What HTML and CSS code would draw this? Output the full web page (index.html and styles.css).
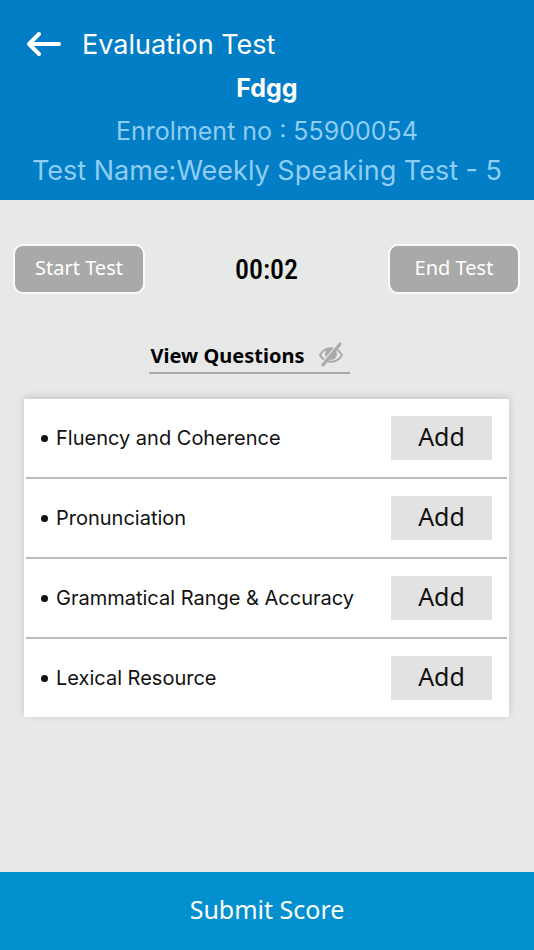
FILE: index.html
```html
<!DOCTYPE html>
<html lang="en">
<head>
    <meta charset="UTF-8">
    <meta name="viewport" content="width=device-width, initial-scale=1.0">
    <title>Evaluation Test</title>
    <link rel="stylesheet" href="styles.css">
</head>
<body>

    <header class="header">
        <div class="title-bar">
            <button class="back" type="button" aria-label="Back">
                <svg width="36" height="28" viewBox="0 0 36 28" fill="none" stroke="currentColor" stroke-width="4" stroke-linecap="round" stroke-linejoin="round">
                    <path d="M3 14H33M13 4L3 14L13 24"/>
                </svg>
            </button>
            <h1>Evaluation Test</h1>
        </div>
        <p class="student">Fdgg</p>
        <p class="enrolment">Enrolment no : 55900054</p>
        <p class="test-name">Test Name:Weekly Speaking Test - 5</p>
    </header>

    <main>
        <div class="controls">
            <button class="test-button" type="button">Start Test</button>
            <time class="timer">00:02</time>
            <button class="test-button" type="button">End Test</button>
        </div>

        <div class="questions">
            <a class="view-questions" href="#">
                View Questions
                <svg width="26" height="26" viewBox="0 0 26 26" fill="none" stroke="#aaa" stroke-width="2" stroke-linecap="round">
                    <path d="M2 13C7 4 19 4 24 13C19 22 7 22 2 13Z"/>
                    <circle cx="13" cy="12" r="6" fill="#aaa" stroke="none"/>
                    <path d="M20 2L3 23" stroke="#e7e9e8" stroke-width="2"/>
                    <path d="M22 2L5 23" stroke-width="3"/>
                </svg>
            </a>
        </div>

        <ul class="criteria">
            <li><span>Fluency and Coherence</span><button type="button">Add</button></li>
            <li><span>Pronunciation</span><button type="button">Add</button></li>
            <li><span>Grammatical Range &amp; Accuracy</span><button type="button">Add</button></li>
            <li><span>Lexical Resource</span><button type="button">Add</button></li>
        </ul>
    </main>

    <button class="submit" type="button">Submit Score</button>

</body>
</html>
```

FILE: styles.css
```css
* {
    box-sizing: border-box;
}
body {
    display: flex;
    flex-direction: column;
    min-height: 100vh;
    margin: 0;
    background-color: #e7e9e8;
    color: #111;
    font-family: Inter, Roboto, sans-serif;
}
button {
    padding: 0 0 4px;
    border: none;
    cursor: pointer;
}
h1, p {
    margin: 0;
    font-weight: 400;
}
.header {
    padding: 24px 0 8px;
    background-color: #027ec6;
    color: #fff;
    text-align: center;
}
.title-bar {
    display: flex;
    align-items: center;
    gap: 20px;
    height: 40px;
    padding-left: 26px;
}
.back {
    display: flex;
    padding: 0;
    background: none;
    color: #fff;
}
.title-bar h1 {
    font-size: 27px;
}
.header .student {
    font-size: 25px;
    font-weight: 700;
    line-height: 48px;
}
.enrolment, .test-name {
    color: #8fcdf3;
}
.enrolment {
    font-size: 25px;
    line-height: 38px;
}
.test-name {
    font-size: 27px;
    line-height: 42px;
}
main {
    flex: 1;
    padding: 44px 25px 44px 24px;
}
.controls {
    display: flex;
    justify-content: space-between;
    align-items: center;
    margin: 0 -11px;
}
.test-button {
    width: 132px;
    height: 50px;
    border: 2px solid #fafafa;
    border-radius: 10px;
    background-color: #a9a9a9;
    color: #fff;
    font: 20px "Noto Sans", sans-serif;
}
.timer {
    color: #000;
    font: 500 28px "Roboto Condensed", "Liberation Sans Narrow", sans-serif;
}
.questions {
    display: flex;
    justify-content: center;
    padding: 42px 34px 25px 0;
}
.view-questions {
    display: flex;
    align-items: center;
    gap: 14px;
    height: 38px;
    padding: 2px 6px 0 2px;
    border-bottom: 2px solid #aaa;
    color: #000;
    font: bold 20px "Noto Sans", sans-serif;
    text-decoration: none;
}
.criteria {
    margin: 0;
    padding: 0 2px;
    background-color: #fff;
    box-shadow: 0 -2px 8px rgba(0, 0, 0, 0.15);
    list-style: none;
}
.criteria li {
    display: flex;
    justify-content: space-between;
    align-items: center;
    padding: 17px 15px;
    font-size: 20px;
}
.criteria li + li {
    border-top: 2px solid #bbb;
}
.criteria span::before {
    content: "";
    display: inline-block;
    width: 7px;
    height: 7px;
    margin-right: 8px;
    border-radius: 50%;
    background-color: #111;
    vertical-align: 3px;
}
.criteria button {
    width: 101px;
    height: 44px;
    background-color: #e2e2e2;
    color: #111;
    font: 25px "Noto Sans", sans-serif;
}
.submit {
    height: 78px;
    background-color: #0290cf;
    color: #fff;
    font: 25px "Noto Sans", sans-serif;
}
```
